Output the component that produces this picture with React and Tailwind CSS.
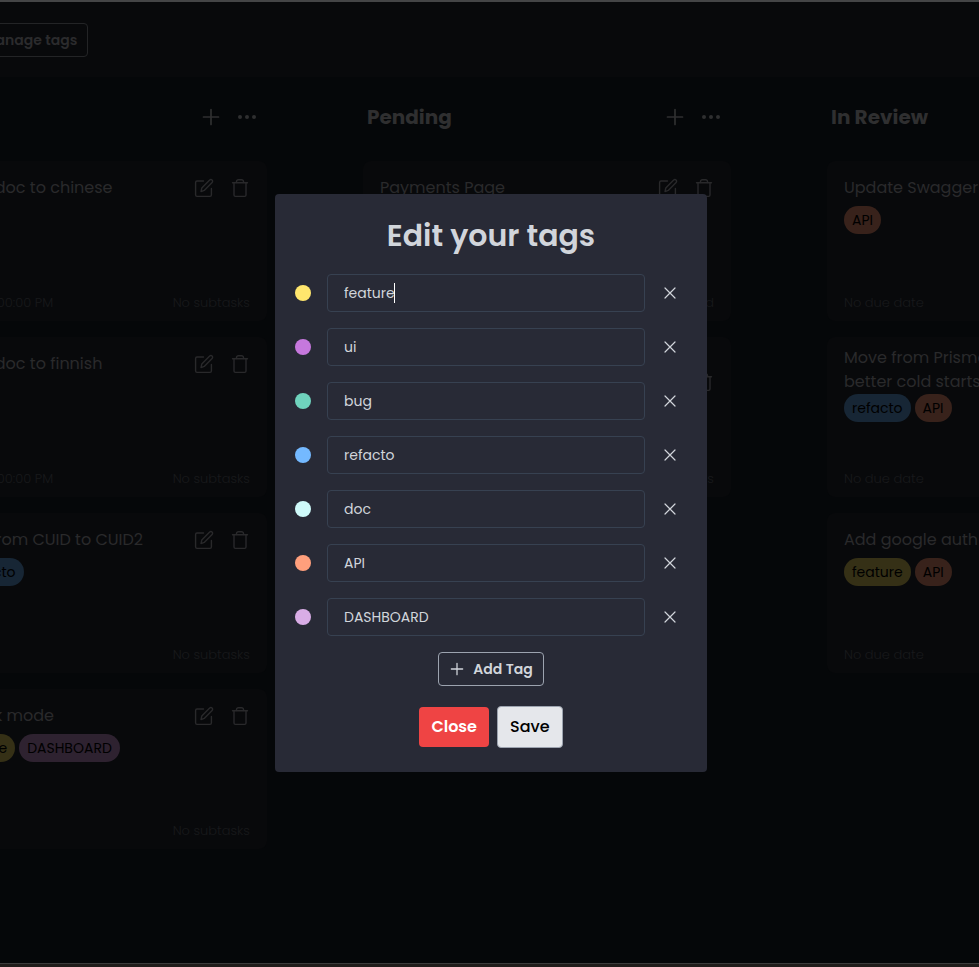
import React from "react";

const TAGS = {
  feature: "bg-[#353016]",
  refacto: "bg-[#172635]",
  API: "bg-[#38221b]",
  DASHBOARD: "bg-[#2e2230]",
};

const COLUMNS = [
  {
    name: "Todo",
    cards: [
      { title: "Translate doc to chinese", tags: [], due: "12/30/2023, 1:00:00 PM", sub: "No subtasks" },
      { title: "Translate doc to finnish", tags: [], due: "12/30/2023, 1:00:00 PM", sub: "No subtasks" },
      { title: "Upgrade from CUID to CUID2", tags: ["API", "refacto"], due: "No due date", sub: "No subtasks" },
      { title: "Setup dark mode", tags: ["ui", "feature", "DASHBOARD"], due: "No due date", sub: "No subtasks" },
    ],
  },
  {
    name: "Pending",
    cards: [
      { title: "Payments Page", tags: [], due: "No due date", sub: "1 of 3 completed" },
      { title: "Improve loading time", tags: [], due: "No due date", sub: "No subtasks", low: true },
    ],
  },
  {
    name: "In Review",
    cards: [
      { title: "Update Swagger docs", tags: ["API"], due: "No due date", sub: "No subtasks" },
      { title: "Move from Prisma to get better cold starts", tags: ["refacto", "API"], due: "No due date", sub: "No subtasks" },
      { title: "Add google auth", tags: ["feature", "API"], due: "No due date", sub: "No subtasks" },
    ],
  },
];

const EDIT_TAGS = [
  { name: "feature", dot: "bg-[#ffe66d]" },
  { name: "ui", dot: "bg-[#c678dd]" },
  { name: "bug", dot: "bg-[#6fd3bd]" },
  { name: "refacto", dot: "bg-[#74b9ff]" },
  { name: "doc", dot: "bg-[#cffafa]" },
  { name: "API", dot: "bg-[#ff9f7c]" },
  { name: "DASHBOARD", dot: "bg-[#d9ade6]" },
];

function Icon({ children, className = "size-6", width = 1.5 }) {
  return (
    <svg viewBox="0 0 24 24" className={className} fill="none" stroke="currentColor" strokeWidth={width} strokeLinecap="round" strokeLinejoin="round" aria-hidden="true">
      {children}
    </svg>
  );
}

const Plus = () => (
  <Icon width={1.7}>
    <path d="M12 4.5v15M4.5 12h15" />
  </Icon>
);

const SmallPlus = () => (
  <Icon width={1.9} className="size-4">
    <path d="M12 3.5v17M3.5 12h17" />
  </Icon>
);

const Dots = () => (
  <Icon>
    <g fill="currentColor" stroke="none">
      <circle cx="5" cy="12" r="2" />
      <circle cx="12" cy="12" r="2" />
      <circle cx="19" cy="12" r="2" />
    </g>
  </Icon>
);

const Edit = () => (
  <Icon width={1.4}>
    <path d="M11.5 5H5a1.4 1.4 0 0 0-1.4 1.4V19A1.4 1.4 0 0 0 5 20.4h13a1.4 1.4 0 0 0 1.4-1.4v-6.5" />
    <path d="M9 15.6l.8-3.6 7.9-7.9a1.6 1.6 0 0 1 2.4 0 1.6 1.6 0 0 1 0 2.3l-7.9 8z" />
  </Icon>
);

const Trash = () => (
  <Icon width={1.4}>
    <path d="M4.5 6.8h15" />
    <path d="M8.5 6.5V5.6a1.9 1.9 0 0 1 1.9-1.9h3.2a1.9 1.9 0 0 1 1.9 1.9v.9" />
    <path d="M6 7v12a1.4 1.4 0 0 0 1.4 1.4h9.2A1.4 1.4 0 0 0 18 19V7" />
  </Icon>
);

function Card({ card }) {
  return (
    <li className="flex h-40 flex-col justify-between rounded-lg bg-[#08090b] px-[17px] pt-[9px] pb-2">
      <div className={card.low ? "flex items-start justify-between pt-[18px]" : "flex items-start justify-between"}>
        <div className={card.title.length > 30 ? "w-56" : "pt-[6px]"}>
          <h3 className="text-base text-[#2a2a2b]">{card.title}</h3>
          <ul className={card.title.length > 30 ? "flex gap-1" : "flex gap-1 pt-[6px]"}>
            {card.tags.map((t) => (
              <li key={t} className={`h-7 rounded-full px-2 text-sm leading-7 text-black ${TAGS[t] || "bg-[#2a1a30]"}`}>
                {t}
              </li>
            ))}
          </ul>
        </div>
        <div className="flex gap-3 pt-[6px] text-[#29292b]">
          <button aria-label="Edit task"><Edit /></button>
          <button aria-label="Delete task" className="-mr-0.5"><Trash /></button>
        </div>
      </div>
      <div className="flex justify-between text-[13px] leading-5 font-light text-[#18191b]">
        <span>{card.due}</span>
        <span>{card.sub}</span>
      </div>
    </li>
  );
}

export default function App() {
  return (
    <div className="relative flex min-h-screen flex-col overflow-hidden border-t-2 border-[#444546] bg-[#050709] font-['Poppins','Inter',sans-serif]">
      <header className="flex h-[75px] items-center bg-[#08090b]">
        <button className="-ml-7 h-[34px] rounded border border-[#232426] px-[10px] text-sm font-semibold whitespace-nowrap text-[#2b2b2d]">
          Manage tags
        </button>
      </header>
      <main className="-ml-[101px] flex grow gap-24 pt-7">
        {COLUMNS.map((col) => (
          <section key={col.name} className="w-[368px] shrink-0">
            <div className="flex h-6 items-center justify-between px-1">
              <h2 className="text-xl font-bold text-[#2f2f30]">{col.name}</h2>
              <div className="flex gap-3 pr-1 text-[#2f2f30]">
                <button aria-label={`Add task to ${col.name}`}><Plus /></button>
                <button aria-label={`${col.name} options`}><Dots /></button>
              </div>
            </div>
            <ul className="flex flex-col gap-4 pt-8">
              {col.cards.map((c) => (
                <Card key={c.title} card={c} />
              ))}
            </ul>
          </section>
        ))}
      </main>
      <footer className="h-1 border-t border-[#3c3c3c] bg-[#211d1b]" />

      <div className="fixed inset-0 flex items-center justify-center pb-0.5 pl-[3px]">
        <form role="dialog" aria-labelledby="dialog-title" className="flex w-[432px] flex-col rounded bg-[#282a36] px-5 pt-5 pb-6 text-[#d1d5db]">
          <h1 id="dialog-title" className="text-center text-3xl leading-[44px] font-semibold">Edit your tags</h1>
          <ul className="flex flex-col gap-4 pt-4">
            {EDIT_TAGS.map((t, i) => (
              <li key={t.name} className="flex items-center">
                <span className={`size-4 shrink-0 rounded-full ${t.dot}`} />
                <div className="relative ml-4 grow">
                  <input aria-label={`Tag ${t.name}`} defaultValue={t.name} className="h-[38px] w-full rounded border border-[#374151] bg-transparent px-4 pt-0.5 text-sm outline-none" />
                  {i === 0 && <span className="absolute top-[9px] left-[67px] h-5 w-px bg-white" />}
                </div>
                <button type="button" aria-label={`Remove ${t.name}`} className="ml-2 flex w-[34px] justify-center">
                  <Icon className="size-4" width={1.8}>
                    <path d="M4.5 4.5l15 15M19.5 4.5l-15 15" />
                  </Icon>
                </button>
              </li>
            ))}
          </ul>
          <button type="button" className="mt-4 flex h-[34px] items-center gap-2 self-center rounded border border-[#9ca3af] px-[10px] text-sm font-semibold">
            <SmallPlus />
            Add Tag
          </button>
          <div className="mt-5 flex items-center justify-center gap-2">
            <button type="button" className="h-10 rounded bg-[#ef4444] px-3 font-semibold text-white">Close</button>
            <button type="submit" className="h-[42px] rounded border border-[#9ca3af] bg-[#e5e7eb] px-3 font-medium text-black">Save</button>
          </div>
        </form>
      </div>
    </div>
  );
}
